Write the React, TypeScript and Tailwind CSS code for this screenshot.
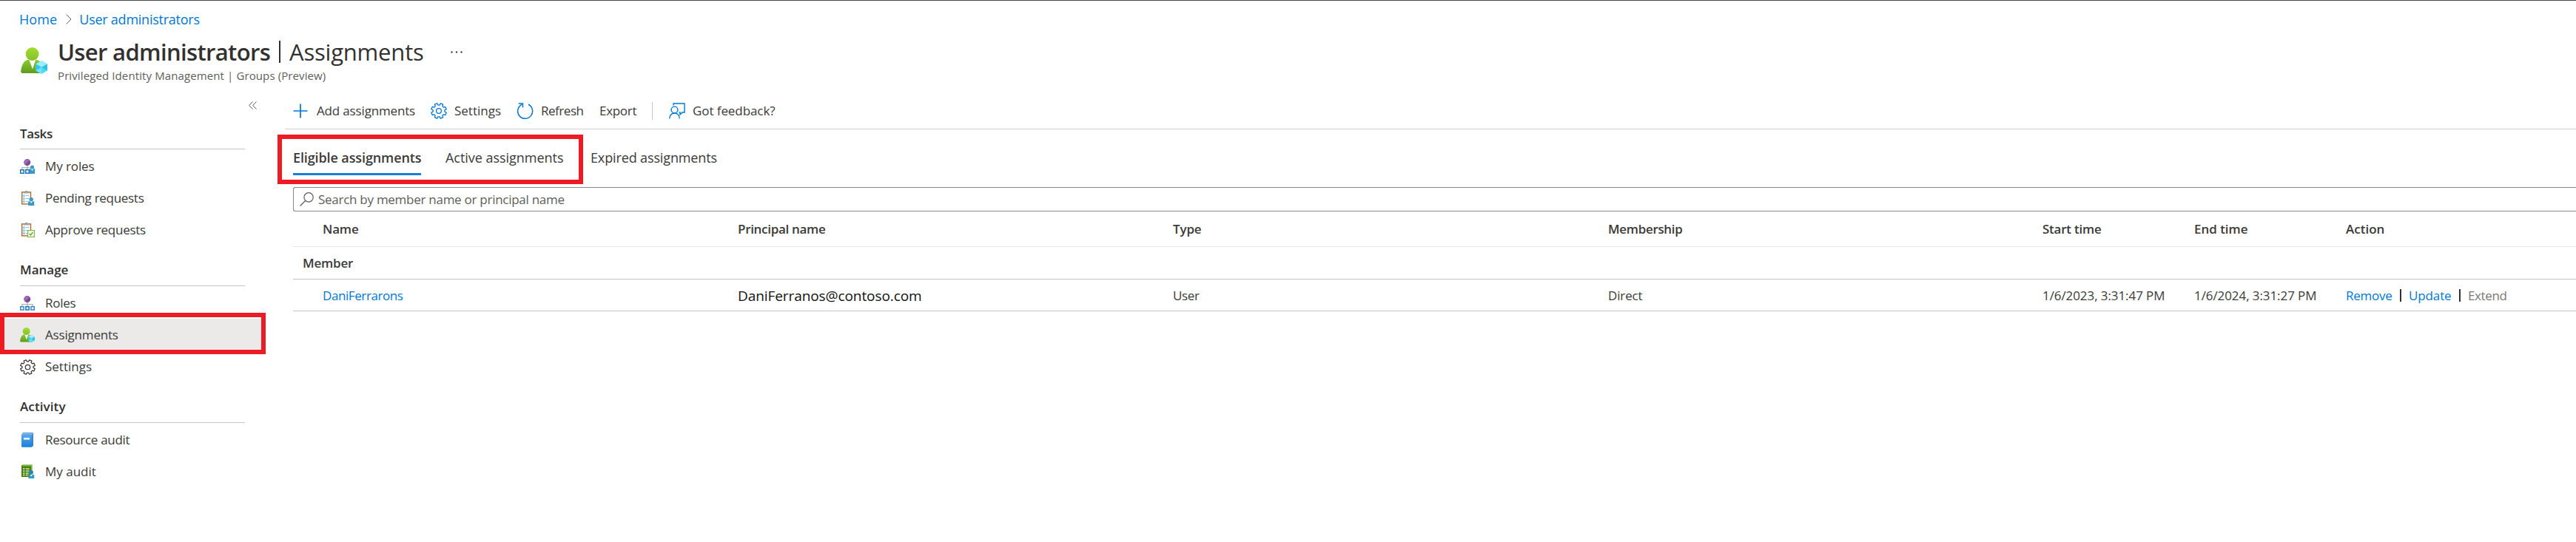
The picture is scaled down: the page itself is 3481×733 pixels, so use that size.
import React from "react";

type IconProps = { className?: string };

const gearPath = (() => {
  const points: string[] = [];
  const teeth = 8;
  const at = (deg: number, r: number) => {
    const a = ((deg - 90) * Math.PI) / 180;
    return `${(12 + r * Math.cos(a)).toFixed(2)} ${(12 + r * Math.sin(a)).toFixed(2)}`;
  };
  for (let i = 0; i < teeth; i++) {
    const c = 22.5 + i * 45;
    points.push(at(c - 14.5, 8.7), at(c - 10, 11.4), at(c + 10, 11.4), at(c + 14.5, 8.7));
  }
  return `M${points.join("L")}Z`;
})();

function GearIcon({ className }: IconProps) {
  return (
    <svg viewBox="0 0 24 24" fill="none" stroke="currentColor" strokeWidth="1.400" strokeLinejoin="round" className={className}>
      <path d={gearPath} />
      <circle cx="12" cy="12" r="3.7" />
    </svg>
  );
}

function PersonCubeIcon({ className }: IconProps) {
  return (
    <svg viewBox="0 0 36 36" className={className}>
      <defs>
        <linearGradient id="headGreen" x1="0" y1="0" x2="0" y2="1">
          <stop offset="0" stopColor="#a3de2e" />
          <stop offset="1" stopColor="#86c02b" />
        </linearGradient>
        <linearGradient id="bodyGreen" x1="0" y1="0" x2="0" y2="1">
          <stop offset="0" stopColor="#8cc92d" />
          <stop offset="1" stopColor="#5f9c20" />
        </linearGradient>
      </defs>
      <path d="M2.5 35C1 35 0 34 .2 32.500C1 24 4 18.500 9 17h13c5 1.500 8 7 8.600 15.500c.1 1.500-.6 2.500-2.300 2.500z" fill="url(#bodyGreen)" />
      <path d="M11.500 17h8.600L16 29.500z" fill="#fff" />
      <circle cx="15.600" cy="9" r="8.900" fill="url(#headGreen)" />
      <path d="M28.200 18l7.800 4.500v9L28.200 36l-7.800-4.500v-9z" fill="#50d8f0" />
      <path d="M28.200 18l7.800 4.500l-7.800 4.500l-7.800-4.500z" fill="#9cebff" />
      <path d="M20.400 22.500l7.800 4.500l-7.800 4.500z" fill="#32c8ec" />
      <path d="M36 22.500v9l-7.800-4.500z" fill="#32bedd" />
      <path d="M28.200 27v9l-7.800-4.500z" fill="#6fe3fa" />
    </svg>
  );
}

function RoleTree() {
  return (
    <>
      <path d="M10 9v3M2.800 15v-3.200h14.400V15M10 12v3" fill="none" stroke="#a3a3a3" strokeWidth="1.100" />
      <circle cx="9.800" cy="4.600" r="4.500" fill="#804998" />
      <path d="M6.600 7.800A4.500 4.500 0 0 1 13 1.400z" fill="#9b6bb5" />
    </>
  );
}

function MyRolesIcon({ className }: IconProps) {
  return (
    <svg viewBox="0 0 20 20" className={className}>
      <RoleTree />
      <rect x=".75" y="14.750" width="4.500" height="4.500" fill="#fff" stroke="#1a76c4" strokeWidth="1.500" />
      <rect x="7.750" y="14.750" width="4.500" height="4.500" fill="#fff" stroke="#1a76c4" strokeWidth="1.500" />
      <path d="M12.800 13.200h7.200V20h-7.200z" fill="#3999c6" />
      <path d="M14.800 13.200h3.400l-1.700 3z" fill="#fff" />
      <circle cx="16.500" cy="11" r="2.500" fill="#3999c6" />
    </svg>
  );
}

function RolesIcon({ className }: IconProps) {
  return (
    <svg viewBox="0 0 20 20" className={className}>
      <RoleTree />
      <rect x=".75" y="14.750" width="4.300" height="4.300" fill="#fff" stroke="#3a8ad0" strokeWidth="1.500" />
      <rect x="7.850" y="14.750" width="4.300" height="4.300" fill="#fff" stroke="#1a76c4" strokeWidth="1.500" />
      <rect x="14.950" y="14.750" width="4.300" height="4.300" fill="#fff" stroke="#3a8ad0" strokeWidth="1.500" />
    </svg>
  );
}

function Clipboard() {
  return (
    <>
      <rect x="2.700" y="1.900" width="11.800" height="16" fill="#fff" stroke="#b4692b" strokeWidth="1.400" />
      <path d="M4.800 3.500h7.600V1.400H10.700a2 2 0 0 0-4.200 0H4.800z" fill="#a0a1a2" />
      <g fill="none" stroke="#7fc3e3" strokeWidth="1.100">
        <circle cx="5.400" cy="6.800" r="1" />
        <circle cx="5.400" cy="10.700" r="1" />
        <circle cx="5.400" cy="14.600" r="1" />
        <path d="M7.800 6.500h4.500M7.800 10.500h4.500M7.800 14.500h3" />
      </g>
    </>
  );
}

function PendingIcon({ className }: IconProps) {
  return (
    <svg viewBox="0 0 20 20" className={className}>
      <Clipboard />
      <path d="M11.200 14.300h8V20h-8z" fill="#3999c6" />
      <path d="M13.500 14.300h3.400l-1.700 2.800z" fill="#fff" />
      <circle cx="15.200" cy="11.600" r="2.700" fill="#3999c6" />
    </svg>
  );
}

function ApproveIcon({ className }: IconProps) {
  return (
    <svg viewBox="0 0 20 20" className={className}>
      <Clipboard />
      <rect x="10.600" y="10.600" width="8.800" height="8.800" fill="#fff" stroke="#7fba42" strokeWidth="1.200" />
      <path d="M12.600 15l1.800 2l3-4" fill="none" stroke="#6bb02b" strokeWidth="1.500" />
    </svg>
  );
}

function BookIcon({ className }: IconProps) {
  return (
    <svg viewBox="0 0 20 20" className={className}>
      <defs>
        <linearGradient id="bookBlue" x1="0" y1="0" x2="0" y2="1">
          <stop offset="0" stopColor="#5ea9ee" />
          <stop offset="1" stopColor="#1681d8" />
        </linearGradient>
      </defs>
      <path d="M3.500.3h13.300a1 1 0 0 1 1 1v16.500a1 1 0 0 1-1 1H3z" fill="#1b6fc0" />
      <path d="M3.500 1.200h13v2h-13z" fill="#cfe6fa" />
      <rect x="2" y="1.800" width="14.400" height="18" rx="1" fill="url(#bookBlue)" />
      <rect x="5" y="7" width="8" height="2.500" fill="#fff" />
    </svg>
  );
}

function MyAuditIcon({ className }: IconProps) {
  return (
    <svg viewBox="0 0 20 20" className={className}>
      <path d="M2 1.500L3.500.3h13.300v15.500L15.500 17z" fill="#8cbf5c" />
      <rect x="2" y="1.500" width="13.200" height="15.500" fill="#498205" />
      <path d="M3.300 1.500h12.400v1h-12.400z" fill="#b7d99a" opacity=".6" />
      <g stroke="#d5e8c0" strokeWidth="1.300">
        <path d="M4 6h2.500M4 9h2.500M4 12h2.500M4 14.500h2.500M7.800 6h4.700M7.800 9h4.700M7.800 12h4M7.800 14.500h3" />
      </g>
      <path d="M11.400 13.800h7.800V19h-7.800z" fill="#3999c6" />
      <path d="M13.600 13.800h3.400l-1.700 2.600z" fill="#fff" />
      <circle cx="15.200" cy="10.700" r="2.700" fill="#1f86c4" />
    </svg>
  );
}

function PlusIcon({ className }: IconProps) {
  return (
    <svg viewBox="0 0 20 20" stroke="currentColor" strokeWidth="1.700" className={className}>
      <path d="M10 .5v19M.5 10h19" />
    </svg>
  );
}

function RefreshIcon({ className }: IconProps) {
  return (
    <svg viewBox="0 0 22 22" fill="none" stroke="currentColor" strokeWidth="1.500" className={className}>
      <path d="M15 2.300A10 10 0 1 1 6.500 2.200" />
      <path d="M1.800 .9h5.700v5.700" />
    </svg>
  );
}

function FeedbackIcon({ className }: IconProps) {
  return (
    <svg viewBox="0 0 22 22" fill="none" stroke="currentColor" strokeWidth="1.400" className={className}>
      <path d="M6 3.500V1h15v12h-3l-3 3v-3h-1.500" />
      <circle cx="7.500" cy="9.500" r="4.400" />
      <path d="M.8 21.500c0-4.500 2.800-7.500 6.700-7.500s6.700 3 6.700 7.500" />
    </svg>
  );
}

function SearchIcon({ className }: IconProps) {
  return (
    <svg viewBox="0 0 20 20" fill="none" stroke="currentColor" strokeWidth="1.300" className={className}>
      <circle cx="12.700" cy="7.200" r="6.500" />
      <path d="M8.200 11.900L.6 19.500" />
    </svg>
  );
}

type NavEntry = { label: string; tracking: string; icon: React.ReactNode; selected?: boolean };
type NavGroup = { title: string; tracking: string; items: NavEntry[] };

const small = "h-5 w-5";

const groups: NavGroup[] = [
  {
    title: "Tasks",
    tracking: "tracking-[-0.4px]",
    items: [
      { label: "My roles", tracking: "tracking-[-0.1px]", icon: <MyRolesIcon className={small} /> },
      { label: "Pending requests", tracking: "tracking-[-0.29px]", icon: <PendingIcon className={small} /> },
      { label: "Approve requests", tracking: "tracking-[-0.28px]", icon: <ApproveIcon className={small} /> },
    ],
  },
  {
    title: "Manage",
    tracking: "tracking-[0px]",
    items: [
      { label: "Roles", tracking: "tracking-[-0.24px]", icon: <RolesIcon className={small} /> },
      { label: "Assignments", tracking: "tracking-[-0.18px]", icon: <PersonCubeIcon className={small} />, selected: true },
      { label: "Settings", tracking: "tracking-[0px]", icon: <GearIcon className="h-[21px] w-[21px] text-[#323130]" /> },
    ],
  },
  {
    title: "Activity",
    tracking: "tracking-[0.1px]",
    items: [
      { label: "Resource audit", tracking: "tracking-[-0.3px]", icon: <BookIcon className={small} /> },
      { label: "My audit", tracking: "tracking-[0px]", icon: <MyAuditIcon className={small} /> },
    ],
  },
];

function Sidebar() {
  return (
    <nav className="w-[385px] shrink-0">
      <div className="flex h-[45px] pt-[22px] pl-[336px]">
        <svg viewBox="0 0 11 11" fill="none" stroke="#605e5c" strokeWidth="1" className="h-[11px] w-[11px]">
          <path d="M5.500 .4L.6 5.500L5.500 10.600M10.500 .4L5.600 5.500L10.500 10.600" />
        </svg>
      </div>
      {groups.map((group) => (
        <section key={group.title} className="mb-3">
          <h2 className={`ml-[27px] flex h-[42px] w-[304px] items-center border-b border-[#c8c6c4] font-semibold text-[#323130] ${group.tracking}`}>
            {group.title}
          </h2>
          <ul className="pt-px">
            {group.items.map((item) => (
              <li
                key={item.label}
                className={`relative flex h-[43.33px] w-[359px] items-center pl-[27px] ${item.selected ? "bg-[#ebeae9]" : ""}`}
              >
                <span className="flex w-[34px]">{item.icon}</span>
                <span className={item.tracking}>{item.label}</span>
                {item.selected && <span className="absolute -top-2 left-0 h-14 w-[359px] border-6 border-[#ed1c24]" />}
              </li>
            ))}
          </ul>
        </section>
      ))}
    </nav>
  );
}

function Toolbar() {
  return (
    <div className="flex h-[60px] items-center border-b border-[#d2d0ce] pt-[10px] pl-[11px]">
      <div className="flex w-[186px] items-center gap-3">
        <PlusIcon className="h-5 w-5 text-[#0078d4]" />
        <span className="pt-px tracking-[-0.16px]">Add assignments</span>
      </div>
      <div className="flex w-[117px] items-center gap-[10px]">
        <GearIcon className="h-[22px] w-[22px] text-[#0078d4]" />
        <span className="pt-px">Settings</span>
      </div>
      <div className="flex w-[111px] items-center gap-[10px]">
        <RefreshIcon className="h-[22px] w-[22px] text-[#0078d4]" />
        <span className="pt-px tracking-[-0.47px]">Refresh</span>
      </div>
      <span className="w-[71px] pt-px tracking-[-0.3px]">Export</span>
      <span className="mr-[22px] h-6 w-px bg-[#c8c6c4]" />
      <div className="flex items-center gap-[10px]">
        <FeedbackIcon className="h-[22px] w-[22px] text-[#0078d4]" />
        <span className="pt-px tracking-[-0.08px]">Got feedback?</span>
      </div>
    </div>
  );
}

function Tabs() {
  return (
    <div className="relative ml-[11px] flex pt-[15px] text-[18px]">
      <div className="flex h-[47px] w-[173px] items-center border-b-3 border-[#1a7fd6] pt-[2px] font-semibold tracking-[-0.11px]">Eligible assignments</div>
      <div className="ml-[33px] flex h-[47px] w-[196px] items-center border-b-3 border-transparent pt-[2px] tracking-[-0.03px]">Active assignments</div>
      <div className="flex h-[47px] items-center border-b-3 border-transparent pt-[2px] tracking-[-0.13px]">Expired assignments</div>
      <div className="absolute top-[7px] -left-[21px] h-[67px] w-[413px] border-6 border-[#ed1c24]" />
    </div>
  );
}

const columns = "grid grid-cols-[561px_588px_588px_587px_205px_205px_1fr] items-center pl-10";

function AssignmentsTable() {
  return (
    <div className="ml-[11px]">
      <div className={`${columns} h-12 border-b border-[#e8e7e6] font-semibold`}>
        <span className="tracking-[-0.17px]">Name</span>
        <span className="tracking-[-0.31px]">Principal name</span>
        <span className="tracking-[-0.15px]">Type</span>
        <span className="tracking-[-0.33px]">Membership</span>
        <span className="tracking-[-0.24px]">Start time</span>
        <span className="tracking-[-0.03px]">End time</span>
        <span>Action</span>
      </div>
      <div className="flex h-11 items-center border-b border-[#c8c6c4] pt-px pl-[13px] font-semibold tracking-[-0.22px]">Member</div>
      <div className={`${columns} h-[43px] border-b border-[#c8c6c4] pt-px`}>
        <a className="tracking-[-0.41px] text-[#0078d4]">DaniFerrarons</a>
        <span className="text-[19px] tracking-[-0.08px] text-[#111]">DaniFerranos@contoso.com</span>
        <span className="tracking-[-0.37px]">User</span>
        <span className="tracking-[-0.14px]">Direct</span>
        <span className="tracking-[-0.08px]">1/6/2023, 3:31:47 PM</span>
        <span className="tracking-[-0.08px]">1/6/2024, 3:31:27 PM</span>
        <div className="flex items-center">
          <a className="w-[73px] tracking-[-0.26px] text-[#0078d4]">Remove</a>
          <span className="h-[17px] w-[2px] bg-[#323130]" />
          <a className="w-[78px] pl-[10px] tracking-[-0.12px] text-[#0078d4]">Update</a>
          <span className="h-[17px] w-[2px] bg-[#323130]" />
          <span className="pl-[10px] tracking-[-0.38px] text-[#7a7876]">Extend</span>
        </div>
      </div>
    </div>
  );
}

export default function App() {
  return (
    <div className="h-[733px] w-full overflow-hidden border-t-1 border-[#484644] bg-white font-['Open_Sans',sans-serif] text-[17px] leading-6 whitespace-nowrap text-[#3b3a39]">
      <header className="h-[114px]">
        <div className="flex h-[49px] items-center pl-[26px] text-[18px] text-[#0078d4]">
          <a className="tracking-[0.1px]">Home</a>
          <svg viewBox="0 0 8 14" fill="none" stroke="#605e5c" className="mr-[10px] ml-3 h-[14px] w-2">
            <path d="M.8 .6L7 7L.8 13.400" />
          </svg>
          <a className="tracking-[-0.25px]">User administrators</a>
        </div>
        <div className="flex pl-7">
          <PersonCubeIcon className="mt-[14px] h-9 w-9" />
          <div className="ml-[14px]">
            <h1 className="flex h-10 items-center text-[31px] text-[#323130]">
              <span className="w-[300px] font-semibold tracking-[-0.66px]">User administrators</span>
              <span className="-ml-px h-[30px] w-[2px] bg-[#323130]" />
              <span className="ml-3 w-[218px] tracking-[-0.2px]">Assignments</span>
              <svg viewBox="0 0 16 3" fill="#484644" className="h-[3px] w-4">
                <circle cx="1.500" cy="1.500" r="1.200" />
                <circle cx="8" cy="1.500" r="1.200" />
                <circle cx="14.500" cy="1.500" r="1.200" />
              </svg>
            </h1>
            <p className="text-[15px] tracking-[0.11px] text-[#605e5c]">Privileged Identity Management | Groups (Preview)</p>
          </div>
        </div>
      </header>
      <div className="flex">
        <Sidebar />
        <main className="min-w-0 flex-1">
          <Toolbar />
          <Tabs />
          <div className="mt-4 ml-[11px] flex h-[33px] items-center rounded-l-[3px] border border-r-0 border-[#8a8886] pl-2 text-[#605e5c]">
            <SearchIcon className="mr-[6px] h-[19px] w-[19px]" />
            <span className="tracking-[-0.27px]">Search by member name or principal name</span>
          </div>
          <AssignmentsTable />
        </main>
      </div>
    </div>
  );
}
